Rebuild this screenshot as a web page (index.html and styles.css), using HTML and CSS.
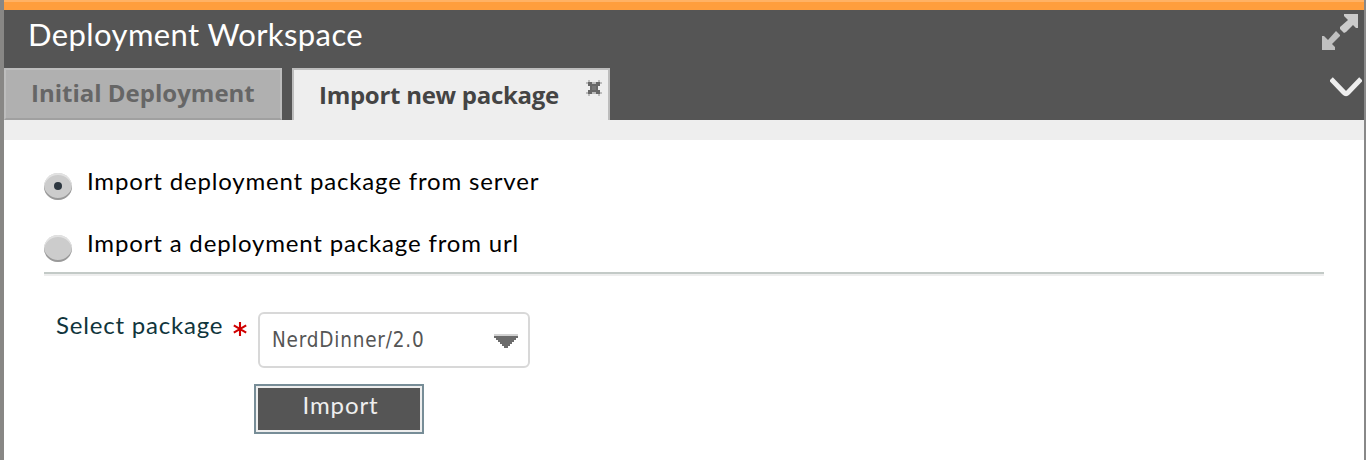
FILE: index.html
```html
<!DOCTYPE html>
<html lang="en">
<head>
<meta charset="utf-8">
<title>Deployment Workspace</title>
<link rel="stylesheet" href="styles.css">
</head>
<body>
<div class="window">
  <header class="header">
    <div class="title-row">
      <h1 class="title">Deployment Workspace</h1>
      <svg class="expand" width="36" height="36" viewBox="0 0 36 36">
        <path fill="#cbcbcb" d="M22 0H36V14H34L31 11L24 18L22 19L18 15V13L26 6L22 2Z"/>
        <path fill="#c0c0c0" d="M14 17L18 21V22L10 30L13 33V36H0V22H2L6 26Z"/>
      </svg>
    </div>
    <nav class="tabs">
      <a class="tab"><span class="tab-text">Initial Deployment</span></a>
      <a class="tab active"><span class="tab-text">Import new package</span>
        <svg class="close" width="16" height="16" viewBox="0 0 8 8" shape-rendering="crispEdges">
          <path fill="#bcbcbc" d="M1 0H2V1H1ZM6 0H7V1H6ZM0 1H1V2H0ZM7 1H8V2H7ZM0 6H1V7H0ZM7 6H8V7H7ZM1 7H2V8H1ZM6 7H7V8H6ZM3 1H5V2H3ZM3 6H5V7H3Z"/>
          <path fill="#686868" d="M1 1H3V2H5V1H7V3H6V5H7V7H5V6H3V7H1V5H2V3H1Z"/>
          <path fill="#777" d="M3 3H5V5H3Z"/>
        </svg>
      </a>
      <svg class="chevron" width="32" height="20" viewBox="0 0 32 20">
        <path d="M1 2L14 15.5Q16 17.5 18 15.5L31 2" fill="none" stroke="#eee" stroke-width="5"/>
      </svg>
    </nav>
  </header>
  <div class="strip"></div>
  <main class="content">
    <div class="options">
      <label class="option"><span class="radio checked"></span><span class="option-text server">Import deployment package from server</span></label>
      <label class="option"><span class="radio"></span><span class="option-text url">Import a deployment package from url</span></label>
    </div>
    <div class="form">
      <div class="label"><span class="label-text">Select package</span>
        <svg class="required" width="14" height="14" viewBox="0 0 14 14"><path d="M7 0V14M.8 3.3L13.2 10.7M13.2 3.3L.8 10.7" stroke="#d00000" stroke-width="2.1"/></svg>
      </div>
      <div class="fields">
        <div class="select"><span class="value">NerdDinner/2.0</span>
          <svg class="arrow" width="24" height="14" viewBox="0 0 12 7" shape-rendering="crispEdges"><path fill="#d2d2d2" d="M0 0H12V1H0Z"/><path fill="#6c6c6c" d="M0 1H12V2H11V3H10V4H9V5H8V6H7V7H5V6H4V5H3V4H2V3H1V2H0Z"/></svg>
        </div>
        <button class="import"><span>Import</span></button>
      </div>
    </div>
  </main>
</div>
</body>
</html>
```
FILE: styles.css
```css
* { box-sizing: border-box; }
body { margin: 0; background: #fff; font-family: Lato, sans-serif; }
.window { height: 460px; border-left: 4px solid #888785; border-right: 2px solid #888; overflow: hidden; }
.header { height: 120px; background: #555; border-top: 2px solid #ffb265; }
.title-row { height: 66px; border-top: 8px solid #ff9e3d; display: flex; justify-content: space-between; padding: 4px 6px 0 24px; }
.title { margin: 2px 0 0; font-size: 31px; line-height: 36px; font-weight: 400; letter-spacing: 0.4px; color: #fff; white-space: nowrap; }
.tabs { height: 52px; display: flex; gap: 10px; padding-right: 2px; }
.tab { width: 278px; height: 52px; padding: 0 0 0 25px; border: 2px solid #bdbdbd; border-bottom-color: #a0a0a0; background: #b0b0b0; color: #666; font: 700 24px/32px "Open Sans", sans-serif; white-space: nowrap; display: flex; }
.tab-text { margin-top: 7px; }
.tab.active { width: 318px; border-bottom: 0; background: #eee; color: #444; justify-content: space-between; padding-right: 6px; }
.tab.active .tab-text { margin-top: 9px; letter-spacing: -0.28px; }
.close { margin-top: 10px; }
.chevron { margin: 9px 0 0 auto; }
.strip { height: 20px; background: #eee; }
.content { padding: 23px 40px 0; }
.options { height: 111px; border-bottom: 2px solid #c3cac7; box-shadow: 0 2px #eee; }
.option { height: 62px; display: flex; gap: 15px; color: #000; }
.radio { width: 28px; height: 27px; margin-top: 10px; border-radius: 50%; background: #ccc; box-shadow: inset 0 -2px #999, inset 0 2px #e2e2e2; display: flex; align-items: center; justify-content: center; }
.radio.checked::after { content: ""; width: 8px; height: 8px; margin-top: -2px; border-radius: 50%; background: #2d3740; }
.option-text { font-size: 24px; line-height: 36px; letter-spacing: 0.83px; white-space: nowrap; }
.form { display: flex; padding: 38px 0 0 12px; }
.label { width: 198px; display: flex; color: #10353c; }
.label-text { margin-top: -1px; font-size: 24px; line-height: 28px; letter-spacing: 0.8px; white-space: nowrap; width: 177px; }
.required { margin-top: 10px; flex: none; }
.select { width: 272px; height: 56px; margin-left: 4px; border: 2px solid #d8d8d8; border-radius: 6px; display: flex; align-items: center; justify-content: space-between; padding: 0 10px 0 12px; color: #555; }
.value { font: 20.5px/28px "DejaVu Sans Condensed", "DejaVu Sans", sans-serif; font-stretch: condensed; letter-spacing: 0.8px; }
.arrow { margin-top: 1px; }
.import { display: block; width: 170px; height: 50px; margin-top: 16px; padding: 0 0 8px 3px; border: 2px solid #778d97; box-shadow: inset 0 0 0 2px #eee; border-radius: 0; background: #555; color: #eee; font: 24px/30px Lato, sans-serif; letter-spacing: 0.9px; }
```
